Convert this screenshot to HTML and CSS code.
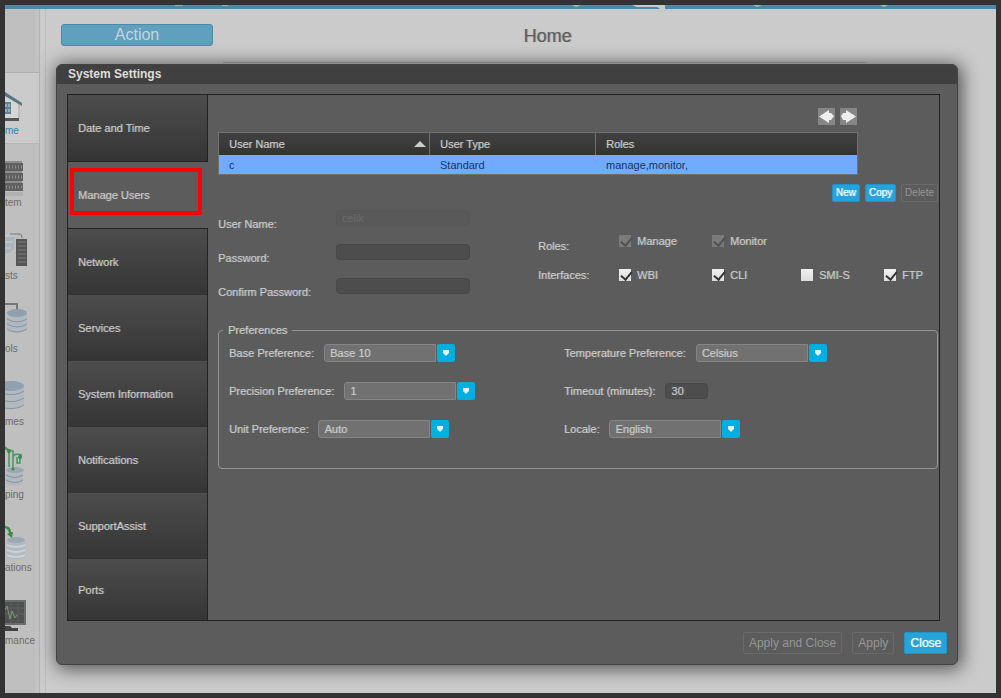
FILE: index.html
```html
<!DOCTYPE html>
<html lang="en">
<head>
<meta charset="utf-8">
<title>System Settings</title>
<link rel="stylesheet" href="styles.css">
</head>
<body>
<div class="app">
  <div class="topbar">
    <svg class="topmarks" width="900" height="6" viewBox="0 0 900 6" aria-hidden="true">
      <path d="M170 0h8M217 0h6" stroke="#8fb0b0" stroke-width="2"/>
      <path d="M567 0l4 2 5-2zM748 0l4 2 5-2zM875 0l4 2 4-2z" fill="#9cc3a0"/>
      <path d="M627 0h33v4h-5l-3-2h-20z" fill="#c9c9c9"/>
    </svg>
  </div>
  <div class="page">
    <nav class="side">
      <div class="side-head"></div>
      <a href="#" class="side-item current">
        <svg width="24" height="36" viewBox="0 0 24 36"><path d="M0 9l14 8v13H0z" fill="#d6d6d5"/><path d="M14 16v14" stroke="#a9a9a9"/><path d="M0 4l17 11v3L0 8z" fill="#567584"/><path d="M0 14h6v12H0z" fill="#5d8294"/><path d="M0 16h2v3H0zM3 16h2v3H3zM0 21h2v3H0zM3 21h2v3H3z" fill="#8fb0bf"/><path d="M0 30h14v3H0z" fill="#555"/></svg>
        <span>me</span>
      </a>
      <a href="#" class="side-item">
        <svg width="24" height="36" viewBox="0 0 24 36"><path d="M0 3h18v8H0zM0 13h18v8H0zM0 23h18v8H0z" fill="#606060"/><path d="M0 2h17M0 12h17M0 22h17" stroke="#8c8c8c" stroke-width="2"/><path d="M1 7h16M1 17h16M1 27h16" stroke="#8f8f8f" stroke-width="3" stroke-dasharray="1 2"/><path d="M0 32h18v4H0z" fill="#a8a8a8" opacity=".6"/></svg>
        <span>tem</span>
      </a>
      <a href="#" class="side-item">
        <svg width="24" height="36" viewBox="0 0 24 36"><path d="M0 3h9v13l-4 4H0z" fill="#acb5bc"/><path d="M0 3h9M0 9h8M0 15h6" stroke="#cbd1d5"/><path d="M5 1h10q2 0 2 4" fill="none" stroke="#777"/><path d="M11 6h11v27H11z" fill="#555"/><path d="M13 9h8M13 13h8M13 17h8M13 21h8M13 25h8M13 29h8" stroke="#808080"/></svg>
        <span>sts</span>
      </a>
      <a href="#" class="side-item">
        <svg width="24" height="40" viewBox="0 0 24 40"><path d="M0 2h12v9" fill="none" stroke="#777" stroke-width="2"/><path d="M2 11v17q10 7 20 0V11z" fill="#b2bac1"/><ellipse cx="12" cy="11" rx="10" ry="4" fill="#8fa0af"/><path d="M2 17q10 6 20 0M2 22q10 6 20 0M2 27q10 6 20 0" fill="none" stroke="#8995a0"/></svg>
        <span>ols</span>
      </a>
      <a href="#" class="side-item">
        <svg width="24" height="36" viewBox="0 0 24 36"><path d="M0 6h19v20q-8 5-19 3z" fill="#b2bac1"/><ellipse cx="6" cy="7" rx="13" ry="5" fill="#8fa0af"/><path d="M0 15q11 2 19-3M0 22q11 2 19-3M0 29q11 2 19-3" fill="none" stroke="#8793a0"/></svg>
        <span>mes</span>
      </a>
      <a href="#" class="side-item">
        <svg width="24" height="42" viewBox="0 0 24 42"><path d="M1 24v14q8 4 17 0V24z" fill="#b2bac1"/><ellipse cx="10" cy="24" rx="9" ry="3" fill="#98a7b3"/><path d="M1 29q9 5 17 0M1 34q9 5 17 0" fill="none" stroke="#86919a"/><path d="M0 1l4 3v17M8 24V11q1-4 9-2M12 11v6h3V9M0 3l8 2v5" fill="none" stroke="#4a9560" stroke-width="1.5"/><circle cx="4" cy="5" r="2" fill="#3a8b4c"/><circle cx="15" cy="11" r="2" fill="#3a8b4c"/><circle cx="8" cy="23" r="1.500" fill="#3a8b4c"/></svg>
        <span>ping</span>
      </a>
      <a href="#" class="side-item">
        <svg width="24" height="36" viewBox="0 0 24 36"><path d="M2 15v18q9 4 18 0V15z" fill="#b2bac1"/><ellipse cx="11" cy="15" rx="9" ry="3" fill="#9ba9b6"/><path d="M2 20q9 4 18 0M2 25q9 4 18 0M2 30q9 4 18 0" fill="none" stroke="#ccd2d7" stroke-width="2"/><path d="M0 1q6 0 6 6l2 0-1 6-5-4 2-1Q3 4 0 3z" fill="#3c8c48"/></svg>
        <span>ations</span>
      </a>
      <a href="#" class="side-item">
        <svg width="24" height="36" viewBox="0 0 24 36"><path d="M0 2h21v25H0z" fill="#6c6c6c"/><path d="M0 4h19v21H0z" fill="#505252"/><path d="M0 10h19M0 16h19M6 4v21M13 4v21" stroke="#5e6060"/><path d="M0 12l2-4 3 13 2-8 3 7 2-3" fill="none" stroke="#789a72"/><path d="M0 28h5l2 2h6v3H0z" fill="#444"/></svg>
        <span>mance</span>
      </a>
    </nav>
    <main class="main">
      <button class="action" type="button">Action</button>
      <h1 class="heading">Home</h1>
      <div class="main-panel"></div>
    </main>
  </div>
</div>

<div class="overlay">
  <section class="dialog" role="dialog" aria-labelledby="dialog-title">
    <h2 class="dialog-title" id="dialog-title">System Settings</h2>
    <div class="dialog-body">
      <nav class="tabs">
        <button type="button" class="tab">Date and Time</button>
        <button type="button" class="tab selected">Manage Users<span class="marker"></span></button>
        <button type="button" class="tab">Network</button>
        <button type="button" class="tab">Services</button>
        <button type="button" class="tab">System Information</button>
        <button type="button" class="tab">Notifications</button>
        <button type="button" class="tab">SupportAssist</button>
        <button type="button" class="tab last">Ports</button>
      </nav>
      <div class="content">
        <div class="pager">
          <button type="button" class="page-btn" aria-label="Previous"><svg width="17" height="17" viewBox="0 0 17 17"><path d="M1 8.500l10-6.500v3h2l3 3-3 4h-2v3z" fill="#eee"/></svg></button>
          <button type="button" class="page-btn" aria-label="Next"><svg width="17" height="17" viewBox="0 0 17 17"><path d="M16 8.500l-10-6.500v3H3L1 8 3 12h3v3z" fill="#eee"/></svg></button>
        </div>
        <table class="users">
          <colgroup><col class="col-name"><col class="col-type"><col></colgroup>
          <thead>
            <tr><th><span class="sorted">User Name<svg width="12" height="6" viewBox="0 0 12 6"><path d="M6 0l6 6H0z" fill="#ccc"/></svg></span></th><th>User Type</th><th>Roles</th></tr>
          </thead>
          <tbody>
            <tr><td>c</td><td>Standard</td><td>manage,monitor,</td></tr>
          </tbody>
        </table>
        <div class="row-actions">
          <button type="button" class="btn small primary">New</button>
          <button type="button" class="btn small primary">Copy</button>
          <button type="button" class="btn small" disabled>Delete</button>
        </div>
        <div class="form">
          <div class="credentials">
            <label for="user">User Name:</label><input class="field" id="user" type="text" value="celik" disabled>
            <label for="pass">Password:</label><input class="field" id="pass" type="password">
            <label for="confirm">Confirm Password:</label><input class="field" id="confirm" type="password">
          </div>
          <div class="access">
            <span class="access-name roles">Roles:</span>
            <label class="check"><input type="checkbox" checked disabled>Manage</label>
            <label class="check"><input type="checkbox" checked disabled>Monitor</label>
            <span class="access-name second">Interfaces:</span>
            <label class="check"><input type="checkbox" checked>WBI</label>
            <label class="check"><input type="checkbox" checked>CLI</label>
            <label class="check"><input type="checkbox">SMI-S</label>
            <label class="check"><input type="checkbox" checked>FTP</label>
          </div>
        </div>
        <fieldset class="prefs">
          <legend>Preferences</legend>
          <div class="prefs-grid">
            <div class="pref"><label for="base">Base Preference:</label><span class="combo"><select id="base"><option>Base 10</option></select><span class="drop"><svg width="8" height="6" viewBox="0 0 8 6"><path d="M1 0h6v3L4 6 1 3z" fill="#e2f4fa"/></svg></span></span></div>
            <div class="pref"><label for="temp">Temperature Preference:</label><span class="combo"><select id="temp"><option>Celsius</option></select><span class="drop"><svg width="8" height="6" viewBox="0 0 8 6"><path d="M1 0h6v3L4 6 1 3z" fill="#e2f4fa"/></svg></span></span></div>
            <div class="pref"><label for="prec">Precision Preference:</label><span class="combo"><select id="prec"><option>1</option></select><span class="drop"><svg width="8" height="6" viewBox="0 0 8 6"><path d="M1 0h6v3L4 6 1 3z" fill="#e2f4fa"/></svg></span></span></div>
            <div class="pref"><label for="timeout">Timeout (minutes):</label><input class="field short" id="timeout" type="text" value="30"></div>
            <div class="pref"><label for="unit">Unit Preference:</label><span class="combo"><select id="unit"><option>Auto</option></select><span class="drop"><svg width="8" height="6" viewBox="0 0 8 6"><path d="M1 0h6v3L4 6 1 3z" fill="#e2f4fa"/></svg></span></span></div>
            <div class="pref"><label for="locale">Locale:</label><span class="combo"><select id="locale"><option>English</option></select><span class="drop"><svg width="8" height="6" viewBox="0 0 8 6"><path d="M1 0h6v3L4 6 1 3z" fill="#e2f4fa"/></svg></span></span></div>
          </div>
        </fieldset>
      </div>
    </div>
    <footer class="dialog-actions">
      <button type="button" class="btn" disabled>Apply and Close</button>
      <button type="button" class="btn" disabled>Apply</button>
      <button type="button" class="btn primary">Close</button>
    </footer>
  </section>
</div>
</body>
</html>
```
FILE: styles.css
```css
* { box-sizing: border-box; }

html, body { height: 100%; }

:root { --heavy: 1px 0 0 rgba(204, 204, 204, 0.4); }

body {
  margin: 0;
  position: relative;
  background: #333;
  font: 11px/14px "Liberation Sans", Arial, sans-serif;
  color: #ccc;
}

button, input, select { font: inherit; color: inherit; margin: 0; }

/* Application behind the dialog */
.app {
  display: flex;
  flex-direction: column;
  height: 100%;
  padding: 5px;
  overflow: hidden;
}

.topbar { height: 4px; background: #4b8aa6; }
.topmarks { display: block; }

.page {
  flex: 1;
  min-height: 0;
  display: flex;
  background: linear-gradient(#bccdd4, #cbcbcb 4px);
}

.side {
  width: 35px;
  background: linear-gradient(90deg, #bfbfbf 28px, #b9b9b9 28px, #c2c2c2 30px);
  border-right: 1px solid #b4b4b4;
  overflow: hidden;
}

.side-head { height: 64px; border-bottom: 1px solid #b0b0b0; }

.side-item {
  display: flex;
  flex-direction: column;
  justify-content: flex-end;
  height: 73px;
  padding-bottom: 8px;
  gap: 1px;
  font-size: 10px;
  line-height: 12px;
  color: #6c6c6c;
  text-decoration: none;
}

.side-item.current {
  height: 71px;
  background: #cbcbcb;
  border-bottom: 1px solid #b5b5b5;
  padding-bottom: 6px;
  color: #4080a4;
}

.main {
  flex: 1;
  margin-left: 5px;
  border-left: 1px solid #bebebe;
  padding: 15px;
  display: grid;
  grid-template-columns: 152px 1fr 257px;
  grid-template-rows: 22px 1fr;
  row-gap: 16px;
}

.action {
  padding: 0;
  border: 1px solid #4c8ba8;
  border-radius: 3px;
  background: #609fbd;
  color: #c4d4dc;
  font-size: 16px;
  line-height: 20px;
}

.heading {
  margin: 0;
  padding-left: 158px;
  text-align: center;
  color: #605f5a;
  font-size: 18px;
  font-weight: normal;
  line-height: 24px;
  text-shadow: 1px 0 0 rgba(96, 95, 90, 0.5);
}

.main-panel {
  grid-column: 1 / -1;
  margin: 0 115px 0 162px;
  border-top: 1px solid #aaa;
}

/* Dialog */
.overlay {
  position: absolute;
  inset: 0;
  display: flex;
  padding: 64px 43px 33px 56px;
}

.dialog {
  flex: 1;
  min-width: 0;
  display: flex;
  flex-direction: column;
  border: 1px solid #424242;
  border-radius: 6px;
  background: #5c5c5c;
  box-shadow: 2px 2px 18px 2px rgba(0, 0, 0, 0.6);
}

.dialog-title {
  margin: 0;
  padding: 2px 11px;
  border-radius: 5px 5px 0 0;
  background: #404040;
  font-size: 12px;
  line-height: 15px;
  color: #ddd;
}

.dialog-body {
  flex: 1;
  display: flex;
  margin: 10px 17px 0 10px;
  border: 1px solid #222;
}

.tabs {
  width: 140px;
  display: flex;
  flex-direction: column;
}

.tab {
  flex: 66 1 0;
  padding: 0 10px;
  border: 0;
  border-right: 1px solid #222;
  background: linear-gradient(#4d4d4d, #353535);
  text-align: left;
  color: #ccc;
  text-shadow: var(--heavy);
}

.tab:first-child { border-bottom: 1px solid #222; }
.tab.selected + .tab { border-top: 1px solid #222; }
.tab.last { flex-grow: 61; }

.tab.selected {
  position: relative;
  background: #5c5c5c;
  border-right-color: #5c5c5c;
}

.marker {
  position: absolute;
  inset: 6px 5px 13px 2px;
  border: 4px solid #f00;
  border-radius: 1px;
}

.content { flex: 1; min-width: 0; padding: 13px 1px 0 10px; }

.pager {
  display: flex;
  justify-content: flex-end;
  gap: 5px;
  padding-right: 81px;
}

.page-btn {
  width: 17px;
  height: 17px;
  padding: 0;
  border: 0;
  background: #868686;
}
.page-btn svg { display: block; }

.users {
  width: calc(100% - 80px);
  margin-top: 7px;
  border: 1px solid #707070;
  border-collapse: separate;
  border-spacing: 0;
  table-layout: fixed;
}
.col-name { width: 210px; }
.col-type { width: 166px; }

.users th, .users td { padding: 0 10px; text-align: left; font-weight: normal; }

.users th {
  height: 22px;
  background: linear-gradient(#414141, #333);
  text-shadow: var(--heavy);
}
.users th + th { border-left: 1px solid #707070; }
.users th:first-child { padding-right: 3px; }
.users td { height: 19px; background: #70abff; color: #17335f; }
.users td + td { padding-left: 11px; }

.sorted { display: flex; justify-content: space-between; align-items: center; }

.row-actions {
  display: flex;
  justify-content: flex-end;
  gap: 5px;
  margin-top: 9px;
}

.btn {
  padding: 3px 5px;
  border: 1px solid #2293c8;
  border-radius: 2px;
  font-size: 12px;
  line-height: 14px;
}
.btn.small { padding: 2px 3px; font-size: 10px; line-height: 12px; }
.btn.primary { background: #28a3da; color: #fff; text-shadow: 1px 0 0 rgba(255, 255, 255, 0.5); }
.btn:disabled { background: #5c5c5c; border-color: #6a6a6a; color: #969696; }

.form {
  display: grid;
  grid-template-columns: 320px 1fr;
  margin-top: 8px;
  text-shadow: var(--heavy);
}

.credentials {
  display: grid;
  grid-template-columns: 118px 134px;
  grid-auto-rows: 16px;
  row-gap: 18px;
}
.credentials label { padding-top: 7px; }

.field {
  min-width: 0;
  height: 16px;
  padding: 0 5px;
  border: 1px solid #484848;
  border-radius: 4px;
  background: #4d4d4d;
}
.field:disabled { background: #595959; border-color: #575757; color: #6b6b6b; text-shadow: none; }
.field.short { width: 43px; text-shadow: inherit; }

.access {
  display: grid;
  grid-template-columns: 81px 93px 89px 83px 1fr;
  grid-template-rows: 14px 14px;
  row-gap: 20px;
  padding-top: 24px;
}
.access-name.roles { padding-top: 5px; }
.second { grid-column: 1; }

.check { display: flex; align-items: center; gap: 6px; }

.check input {
  appearance: none;
  width: 12px;
  height: 12px;
  background: linear-gradient(#f0f0f0, #ddd);
}
.check input:checked::before {
  content: "";
  display: block;
  width: 9px;
  height: 5px;
  margin: 2px;
  border: solid #333;
  border-width: 0 0 2px 2px;
  transform: rotate(-50deg);
}
.check input:disabled { background: #7a7a7a; }
.check input:disabled::before { border-color: #505050; }

.prefs {
  min-width: 0;
  min-height: 146px;
  margin: 29px 0 0;
  padding: 0 10px;
  border: 1px solid #959595;
  border-radius: 4px;
  text-shadow: var(--heavy);
}
.prefs legend { margin-left: -6px; padding: 0 5px; }

.prefs-grid {
  display: grid;
  grid-template-columns: 335px 1fr;
  grid-auto-rows: 18px;
  row-gap: 20px;
  padding-top: 7px;
}

.pref { display: flex; align-items: center; gap: 10px; }

.combo { display: flex; gap: 1px; }
.combo select {
  appearance: none;
  width: 112px;
  height: 18px;
  padding: 0 5px;
  border: 1px solid #858585;
  border-radius: 3px 0 0 3px;
  background: #717171;
  color: #ccc;
  text-shadow: inherit;
}
.drop {
  display: flex;
  align-items: center;
  justify-content: center;
  width: 18px;
  height: 18px;
  border-radius: 2px;
  background: #00aee0;
}

.dialog-actions {
  display: flex;
  justify-content: flex-end;
  gap: 10px;
  padding: 11px 10px 10px;
}
```
